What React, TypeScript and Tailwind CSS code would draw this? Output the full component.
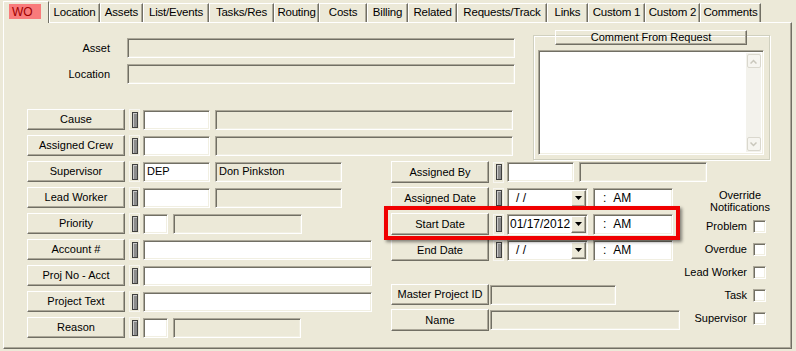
import type { ReactNode } from 'react';

const SUNK =
  'border border-t-[#ACA899] border-l-[#ACA899] border-b-white border-r-white shadow-[inset_1px_1px_0_#716F64,inset_-1px_-1px_0_#F1EFE2]';
const RAISE =
  'border border-t-white border-l-white border-b-[#716F64] border-r-[#716F64] shadow-[inset_-1px_-1px_0_#ACA899]';

const TABS: [string, number][] = [
  ['Location', 51],
  ['Assets', 43],
  ['List/Events', 66],
  ['Tasks/Res', 65],
  ['Routing', 45],
  ['Costs', 48],
  ['Billing', 41],
  ['Related', 49],
  ['Requests/Track', 90],
  ['Links', 41],
  ['Custom 1', 57],
  ['Custom 2', 55],
  ['Comments', 61],
];

function Btn({ children, w = 98, h = 21 }: { children: ReactNode; w?: number; h?: number }) {
  return (
    <div
      className={`${RAISE} shrink-0 flex items-center justify-center whitespace-nowrap`}
      style={{ width: w, height: h }}
    >
      {children}
    </div>
  );
}

function Lock() {
  return (
    <div className="ml-[4px] w-[11px] h-[21px] shrink-0 border border-[#F7F6F1] flex items-center justify-center">
      <div className="w-[6px] h-[16px] bg-[#8C8C8C] border border-[#404040] shadow-[inset_1px_1px_0_#C8C8C8]" />
    </div>
  );
}

function Field({ w, white, children, ml = 0 }: { w: number; white?: boolean; children?: ReactNode; ml?: number }) {
  return (
    <div
      className={`${SUNK} ${white ? 'bg-white' : 'bg-[#ECE9D8]'} h-[20px] shrink-0 flex items-center px-[3px] whitespace-nowrap`}
      style={{ width: w, marginLeft: ml }}
    >
      {children}
    </div>
  );
}

function DateBox({ value }: { value: string }) {
  return (
    <div className={`${SUNK} bg-white ml-[3px] w-[81px] h-[21px] shrink-0 flex items-center`}>
      <div className={`flex-1 ${value ? 'pl-[2px]' : 'pl-[8px]'} text-[12px]`}>{value || '/ /'}</div>
      <div className={`${RAISE} bg-[#ECE9D8] w-[15px] h-[17px] mr-[1px] flex items-center justify-center`}>
        <svg width="7" height="4" viewBox="0 0 7 4">
          <path d="M0 0H7L3.5 4Z" fill="#000" />
        </svg>
      </div>
    </div>
  );
}

function TimeBox() {
  return (
    <div className={`${SUNK} bg-white ml-[5px] w-[80px] h-[21px] shrink-0 flex items-center pl-[9px] text-[12px]`}>
      <span>:</span>
      <span className="ml-[7px]">AM</span>
    </div>
  );
}

function Check({ label }: { label: string }) {
  return (
    <div className="h-[13px] flex items-center justify-end mr-[4px]">
      <span>{label}</span>
      <div className={`${SUNK} bg-white ml-[6px] w-[13px] h-[13px]`} />
    </div>
  );
}

function Chevron({ up }: { up?: boolean }) {
  return (
    <div className="w-[14px] h-[14px] rounded-[2px] border border-[#DAD8CE] bg-[#F6F5F0] flex items-center justify-center">
      <svg width="7" height="5" viewBox="0 0 7 5">
        <path d={up ? 'M0.5 4.5L3.5 1.5L6.5 4.5' : 'M0.5 0.5L3.5 3.5L6.5 0.5'} stroke="#C9C7BC" strokeWidth="1.5" fill="none" />
      </svg>
    </div>
  );
}

export default function App() {
  return (
    <div className="relative w-[796px] h-[351px] bg-[#ECE9D8] text-black text-[11px] leading-none font-['Liberation_Sans',Arial,sans-serif] overflow-hidden">
      {/* tab strip */}
      <div className="flex items-end h-[22px] pl-[3px]">
        <div className="relative z-10 w-[46px] h-[22px] -mb-[1px] bg-[#ECE9D8] border-l border-t border-white border-r border-r-[#716F64] pt-[2px] pl-[5px]">
          <div className="w-[32px] h-[15px] bg-[#F97B7B] text-[#A00000] text-[12px] flex items-center pl-[3px]">WO</div>
        </div>
        {TABS.map(([t, w]) => (
          <div
            key={t}
            className="h-[19px] border-l border-t border-white border-r border-r-[#716F64] shadow-[inset_-1px_0_0_#ACA899] flex items-center justify-center text-[11.5px] tracking-[-0.2px] whitespace-nowrap"
            style={{ width: w }}
          >
            {t}
          </div>
        ))}
      </div>

      {/* panel */}
      <div className="ml-[3px] w-[789px] h-[327px] border-l border-t border-white border-r border-b border-r-[#716F64] border-b-[#716F64] shadow-[inset_-1px_-1px_0_#ACA899]">
        {/* top section */}
        <div className="flex h-[138px]">
          <div className="w-[511px] flex flex-col">
            <div className="mt-[15px] flex items-center">
              <div className="w-[106px] text-right">Asset</div>
              <Field w={388} ml={17} />
            </div>
            <div className="mt-[6px] flex items-center">
              <div className="w-[106px] text-right">Location</div>
              <Field w={388} ml={17} />
            </div>
            <div className="mt-[25px] ml-[23px] flex items-center">
              <Btn>Cause</Btn>
              <Lock />
              <Field w={67} white ml={3} />
              <Field w={298} ml={5} />
            </div>
            <div className="mt-[5px] ml-[23px] flex items-center">
              <Btn>Assigned Crew</Btn>
              <Lock />
              <Field w={67} white ml={3} />
              <Field w={298} ml={5} />
            </div>
          </div>

          {/* comment group */}
          <div className="ml-[18px] mt-[7px] w-[237px] flex flex-col">
            <div className="relative z-10 ml-[22px]">
              <Btn w={192} h={15}>Comment From Request</Btn>
            </div>
            <div className="-mt-[10px] w-[237px] h-[125px] border border-[#D0D0BF] shadow-[inset_1px_1px_0_#fff,1px_1px_0_#fff] pt-[14px] pl-[4px]">
              <div className={`${SUNK} bg-white w-[226px] h-[105px] flex justify-end p-[2px]`}>
                <div className="w-[15px] h-full bg-[#F3F2EC] flex flex-col justify-between items-center py-[1px]">
                  <Chevron up />
                  <Chevron />
                </div>
              </div>
            </div>
          </div>
        </div>

        {/* bottom section */}
        <div className="flex">
          <div className="ml-[23px] w-[346px] flex flex-col gap-[5px]">
            <div className="flex items-center">
              <Btn>Supervisor</Btn>
              <Lock />
              <Field w={67} white ml={3}>DEP</Field>
              <Field w={127} ml={5}>Don Pinkston</Field>
            </div>
            <div className="flex items-center">
              <Btn>Lead Worker</Btn>
              <Lock />
              <Field w={67} white ml={3} />
              <Field w={127} ml={5} />
            </div>
            <div className="flex items-center">
              <Btn>Priority</Btn>
              <Lock />
              <Field w={25} white ml={3} />
              <Field w={129} ml={5} />
            </div>
            <div className="flex items-center">
              <Btn>Account #</Btn>
              <Lock />
              <Field w={229} white ml={3} />
            </div>
            <div className="flex items-center">
              <Btn>Proj No - Acct</Btn>
              <Lock />
              <Field w={229} white ml={3} />
            </div>
            <div className="flex items-center">
              <Btn>Project Text</Btn>
              <Lock />
              <Field w={229} white ml={3} />
            </div>
            <div className="flex items-center">
              <Btn>Reason</Btn>
              <Lock />
              <Field w={25} white ml={3} />
              <Field w={128} ml={5} />
            </div>
          </div>

          <div className="ml-[18px] w-[290px] flex flex-col">
            <div className="flex items-center">
              <Btn h={22}>Assigned By</Btn>
              <Lock />
              <Field w={67} white ml={3} />
              <Field w={128} ml={5} />
            </div>
            <div className="mt-[4px] flex items-center">
              <Btn h={22}>Assigned Date</Btn>
              <Lock />
              <DateBox value="" />
              <TimeBox />
            </div>
            <div className="mt-[4px] flex items-center">
              <Btn h={22}>Start Date</Btn>
              <Lock />
              <DateBox value="01/17/2012" />
              <TimeBox />
            </div>
            <div className="mt-[4px] flex items-center">
              <Btn h={22}>End Date</Btn>
              <Lock />
              <DateBox value="" />
              <TimeBox />
            </div>
            <div className="mt-[23px] flex items-center">
              <Btn>Master Project ID</Btn>
              <Field w={126} ml={1} />
            </div>
            <div className="mt-[4px] flex items-center">
              <Btn h={22}>Name</Btn>
              <Field w={190} ml={1} />
            </div>
          </div>

          <div className="w-[89px] flex flex-col">
            <div className="mt-[28px] ml-[19px] w-[80px] text-center leading-[12px]">
              Override
              <br />
              Notifications
            </div>
            <div className="mt-[7px] flex flex-col gap-[10px]">
              <Check label="Problem" />
              <Check label="Overdue" />
              <Check label="Lead Worker" />
              <Check label="Task" />
              <Check label="Supervisor" />
            </div>
          </div>
        </div>
      </div>

      {/* highlight annotation */}
      <div className="absolute left-[384px] top-[206px] w-[296px] h-[34px] border-4 border-[#F00000] shadow-[2px_2px_3px_rgba(0,0,0,0.45)]" />
    </div>
  );
}
